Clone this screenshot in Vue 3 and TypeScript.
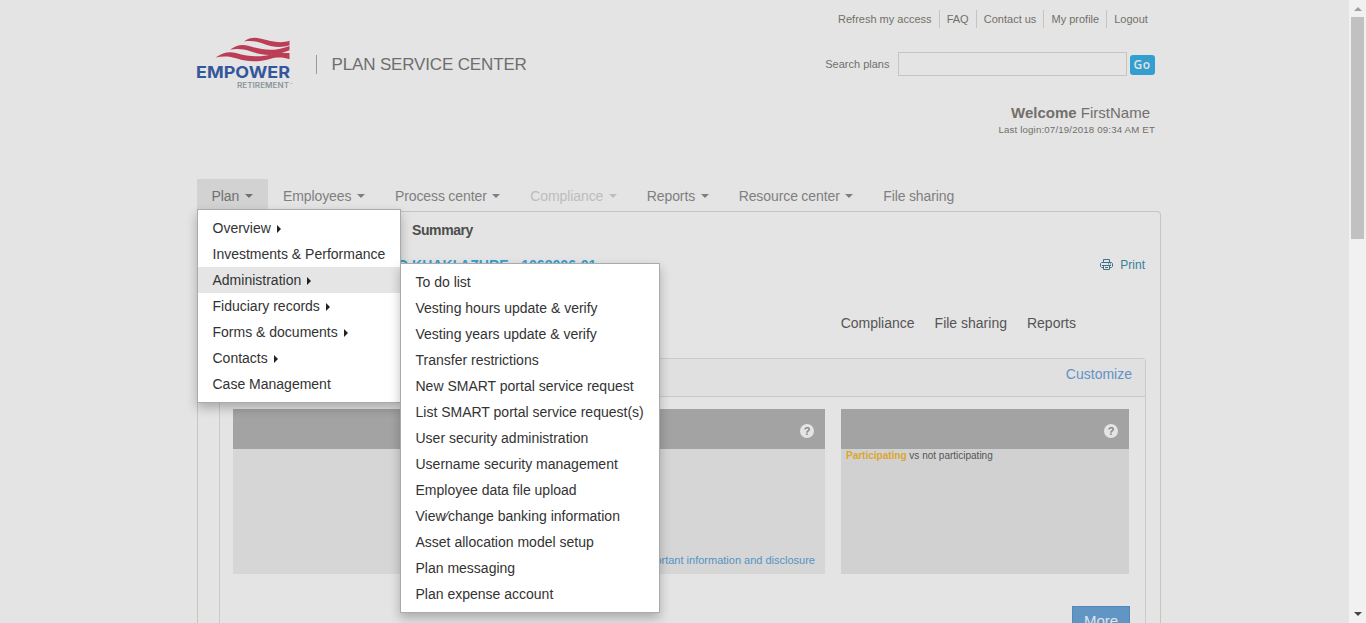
<script setup lang="ts">
interface NavItem { label: string; caret: boolean; state?: 'open' | 'disabled' }
interface MenuItem { label: string; sub?: boolean; active?: boolean }

const topLinks: string[] = ['Refresh my access', 'FAQ', 'Contact us', 'My profile', 'Logout']

const nav: NavItem[] = [
  { label: 'Plan', caret: true, state: 'open' },
  { label: 'Employees', caret: true },
  { label: 'Process center', caret: true },
  { label: 'Compliance', caret: true, state: 'disabled' },
  { label: 'Reports', caret: true },
  { label: 'Resource center', caret: true },
  { label: 'File sharing', caret: false },
]

const planMenu: MenuItem[] = [
  { label: 'Overview', sub: true },
  { label: 'Investments & Performance' },
  { label: 'Administration', sub: true, active: true },
  { label: 'Fiduciary records', sub: true },
  { label: 'Forms & documents', sub: true },
  { label: 'Contacts', sub: true },
  { label: 'Case Management' },
]

const adminMenu: string[] = [
  'To do list',
  'Vesting hours update & verify',
  'Vesting years update & verify',
  'Transfer restrictions',
  'New SMART portal service request',
  'List SMART portal service request(s)',
  'User security administration',
  'Username security management',
  'Employee data file upload',
  'View\u2044change banking information',
  'Asset allocation model setup',
  'Plan messaging',
  'Plan expense account',
]

const quickLinks: string[] = ['Compliance', 'File sharing', 'Reports']
</script>

<template>
  <div class="screen">
    <div class="page">
      <header class="header">
        <div class="brand">
          <svg class="logo" width="100" height="56" viewBox="1 0 100 56">
            <g fill="#bb3e56">
              <path d="M48 8.500C53 4.800 58 4.200 64 5.500C75 8 83 11 93.500 7.800V12.300C84 15.500 75 13.800 66 10.300C60 8 54 7.500 48 8.500Z" />
              <path d="M34 16.800C40 12 46 11 53 13C66 16.600 76 19.500 93.500 12.900V17.300C78 24.200 66 22.200 55 18.500C47 15.800 40 15.500 34 16.800Z" />
              <path d="M19.500 24.500C27 19.500 33 18 40 20C54 24.300 66 24.100 75 21.500C82 19.500 87 19.900 93.500 20V26.300C87 23.900 80 24.200 74 25.900C62 29.400 51 28.800 41 25.500C33 22.800 27 23 19.500 24.500Z" />
            </g>
            <text x="0" y="45" class="logo-name" textLength="94" lengthAdjust="spacingAndGlyphs">EMPOWER</text>
            <text x="41" y="55" class="logo-sub" textLength="52" lengthAdjust="spacingAndGlyphs">RETIREMENT</text>
            <text x="94" y="52.500" class="logo-tm">™</text>
          </svg>
          <span class="rule"></span>
          <span class="product">PLAN SERVICE CENTER</span>
        </div>
        <div class="account">
          <nav class="top-links">
            <a v-for="l in topLinks" :key="l">{{ l }}</a>
          </nav>
          <div class="search">
            <label>Search plans</label>
            <input type="text" />
            <button>Go</button>
          </div>
          <div class="welcome"><b>Welcome</b> FirstName</div>
          <div class="login">Last login:07/19/2018 09:34 AM ET</div>
        </div>
      </header>

      <nav class="nav">
        <div v-for="n in nav" :key="n.label" class="nav-item" :class="n.state">
          {{ n.label }}<i v-if="n.caret" class="caret"></i>
          <div v-if="n.state === 'open'" class="menu">
            <div v-for="m in planMenu" :key="m.label" class="menu-row" :class="{ active: m.active }">
              {{ m.label }}<i v-if="m.sub" class="arrow"></i>
              <div v-if="m.active" class="menu submenu">
                <div v-for="a in adminMenu" :key="a" class="menu-row">{{ a }}</div>
              </div>
            </div>
          </div>
        </div>
      </nav>

      <main class="content">
        <div class="tabs">Summary</div>
        <div class="title-row">
          <h1>D KHAKI AZURE - 1068006-01</h1>
          <a class="print">
            <svg width="13" height="12" viewBox="0 0 13 12" fill="none" stroke="#41708b">
              <path d="M3.500 3.500V.5H9.500V3.500M3 8.500H1.500L.5 7.500V4.500L1.500 3.500H11.500L12.500 4.500V7.500L11.500 8.500H10M2 6.500H11M3.500 6.500V10.500H9.500V6.500M5 8.500H8M8 4.900H9M10 4.900H11" />
            </svg>
            Print
          </a>
        </div>
        <div class="quick"><a v-for="q in quickLinks" :key="q">{{ q }}</a></div>
        <section class="panel">
          <div class="panel-head">Customize</div>
          <div class="cards">
            <article class="card">
              <div class="card-head"></div>
              <div class="card-body"></div>
            </article>
            <article class="card">
              <div class="card-head"><span class="help">?</span></div>
              <div class="card-body bottom"><a>Important information and disclosure</a></div>
            </article>
            <article class="card dark">
              <div class="card-head"><span class="help">?</span></div>
              <div class="card-body"><p><b>Participating</b> vs not participating</p></div>
            </article>
          </div>
          <button class="more">More</button>
        </section>
      </main>
    </div>
    <div class="scrollbar">
      <i class="up"></i>
      <div class="thumb"></div>
      <i class="down"></i>
    </div>
  </div>
</template>

<style>
html, body { margin: 0; overflow: hidden; }
</style>

<style scoped>
* { box-sizing: border-box; }
.screen {
  display: flex; width: 1366px; height: 623px; overflow: hidden;
  background: #e4e4e4; font-family: "Liberation Sans", Arial, sans-serif; font-size: 14px; color: #555;
}
.page { width: 964px; margin: 0 188px 0 197px; flex: none; }
.header { height: 179px; display: flex; justify-content: space-between; }
.brand { display: flex; height: 56px; margin-top: 33px; }
.logo { overflow: visible; }
.logo-name { font: bold 16.500px Inter, sans-serif; fill: #34579b; }
.logo-sub { font: 600 7.500px Inter, sans-serif; fill: #8a959b; }
.logo-tm { font: 4px Inter, sans-serif; fill: #8a959b; }
.rule { width: 1px; height: 19px; margin: 22px 0 0 19px; background: #999; }
.product { margin: 22px 0 0 14.500px; font-size: 17px; letter-spacing: -.15px; line-height: 20px; color: #6e6e6e; white-space: nowrap; }
.account { display: flex; flex-direction: column; align-items: flex-end; padding-right: 6px; color: #736f69; }
.top-links { display: flex; margin-top: 10px; font-size: 11px; line-height: 18px; }
.top-links a { padding: 0 7.100px 0 7px; border-left: 1px solid #c5c4bd; }
.top-links a:first-child { border-left: 0; }
.search { display: flex; margin-top: 24px; height: 24px; font-size: 11px; line-height: 24px; }
.search input { width: 229px; height: 24px; margin: 0 3px 0 8.500px; padding: 0; border: 1px solid #c5c4bd; background: transparent; }
.search button {
  width: 25px; height: 20px; margin-top: 3px; padding: 0 1px 0 0; border: 0; border-radius: 3px;
  background: #339fd0; color: #e4e4e4; font: 600 12px/20px "Open Sans", sans-serif; letter-spacing: .6px;
}
.welcome { margin: 28px 5px 0 0; font-size: 15px; line-height: 18px; }
.login { font-size: 9.700px; letter-spacing: .16px; line-height: 14px; margin-top: 1px; }

.nav { display: flex; height: 32px; }
.nav-item { position: relative; height: 30px; padding: 0 15px; line-height: 34px; color: #7f7f7f; white-space: nowrap; letter-spacing: -.09px; word-spacing: -.3px; }
.nav-item.open { padding-left: 14.500px; padding-right: 15.300px; background: #d2d2d2; color: #707070; z-index: 5; }
.nav-item.disabled { color: #bdbdbd; }
.caret {
  display: inline-block; margin-left: 5.500px; vertical-align: 3px;
  border: 4px solid transparent; border-top-color: currentColor; border-bottom: 0;
}
.menu {
  position: absolute; left: 0; top: 30px; width: 204px; padding: 5px 0;
  background: #fff; border: 1px solid #aaa; box-shadow: 0 5px 10px rgba(0, 0, 0, .25);
  color: #333; line-height: 26px; word-spacing: 0; letter-spacing: 0;
}
.menu-row { position: relative; height: 26px; padding: 0 14.500px; line-height: 26px; white-space: nowrap; }
.menu-row.active { background: #e5e5e5; }
.arrow {
  display: inline-block; margin-left: 6px; vertical-align: 0;
  border: 4px solid transparent; border-left-color: #222; border-right: 0;
}
.submenu { left: 202px; top: -4px; width: 260px; }

.content { height: 420px; border: 1px solid #c6c5c0; border-bottom: 0; border-radius: 4px 4px 0 0; padding: 0 14px 0 21px; }
.tabs { margin: 8px 0 0 193px; line-height: 20px; font-weight: bold; letter-spacing: -.4px; color: #4d4d4d; }
.title-row { display: flex; justify-content: space-between; margin-top: 14px; height: 20px; line-height: 20px; }
h1 { margin: 0 0 0 179px; font-size: 14px; letter-spacing: .05px; line-height: 22px; color: #339fd0; }
.print { display: flex; align-items: center; gap: 7px; margin: 1px 1px -1px 0; font-size: 12px; color: #398199; }
.quick { display: flex; justify-content: flex-end; gap: 20px; margin: 39px 70px 0 0; line-height: 20px; }
.panel { margin-top: 25px; height: 300px; border: 1px solid #cacaca; border-radius: 3px; }
.panel-head { height: 38px; padding-right: 13px; border-bottom: 1px solid #cacaca; background: #e0e0e0; line-height: 31px; text-align: right; color: #6292c5; }
.cards { display: flex; gap: 16px; margin: 12px 0 0 13px; }
.card { width: 288px; height: 165px; flex: none; background: #d6d6d6; }
.card.dark { background: #d1d1d1; }
.card-head { display: flex; justify-content: flex-end; height: 40px; padding: 15px 11px 0 0; background: #a3a3a3; }
.help { width: 14px; height: 14px; border-radius: 50%; background: #e4e4e4; color: #858585; font-weight: bold; font-size: 11px; line-height: 14px; text-align: center; }
.card-body { height: 125px; padding: 0 5px; font-size: 10px; }
.card-body p { margin: 0; line-height: 14px; }
.card-body p b { color: #dba72f; }
.card-body.bottom { display: flex; align-items: flex-end; justify-content: flex-end; padding: 0 10px 7px; font-size: 11px; line-height: 14px; color: #5394c2; }
.more {
  display: block; width: 58px; height: 34px; margin: 32px 15px 0 auto; padding: 0 0 4px; border: 1px solid #5289bb;
  background: #6095c4; color: #dfe6ec; font: 15px/28px "Liberation Sans", Arial, sans-serif;
}

.scrollbar { display: flex; flex-direction: column; align-items: center; width: 17px; height: 623px; background: #f1f1f1; flex: none; }
.thumb { width: 13px; height: 222px; background: #c1c1c1; margin-top: 6px; }
.up { margin-top: 7px; border: 4px solid transparent; border-bottom-color: #a0a0a0; border-top: 0; }
.down { margin-top: 373px; border: 4px solid transparent; border-top-color: #444; border-bottom: 0; }
</style>
